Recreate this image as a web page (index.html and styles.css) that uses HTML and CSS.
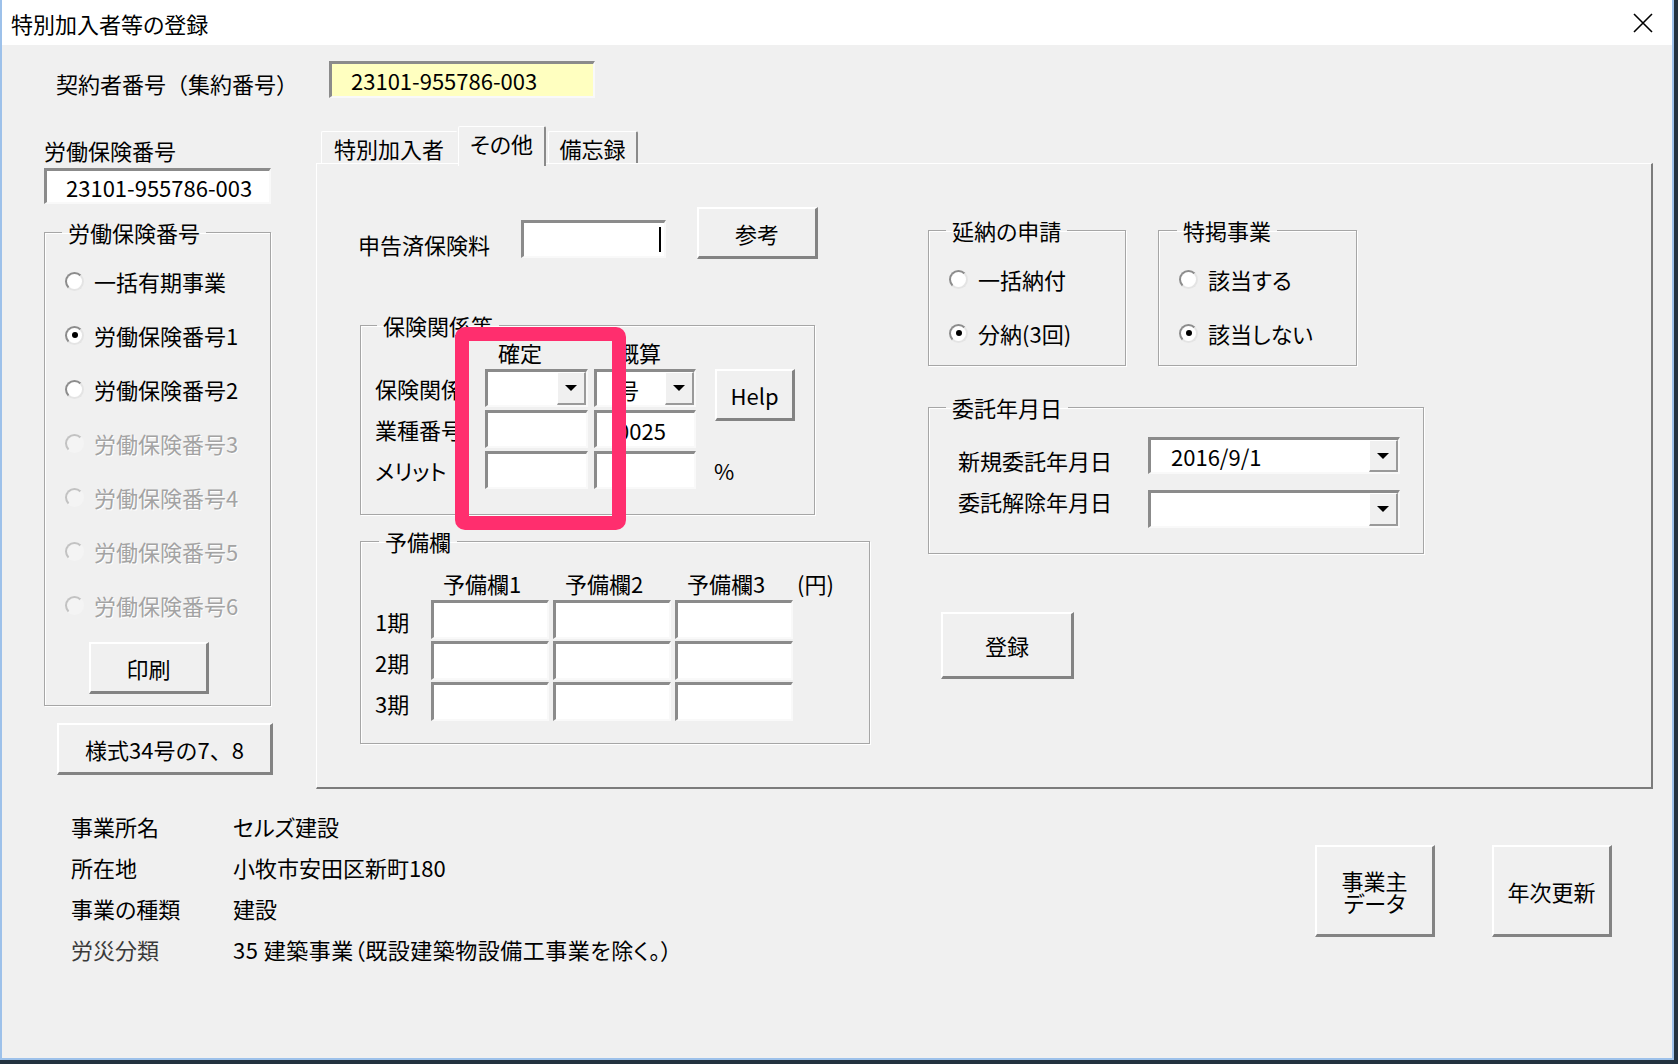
FILE: index.html
```html
<!DOCTYPE html>
<html lang="ja">
<head>
    <meta charset="UTF-8">
    <meta name="viewport" content="width=device-width, initial-scale=1.0">
    <title>特別加入者等の登録</title>
    <link rel="stylesheet" href="styles.css">
</head>
<body>
    <div class="window">
        <div class="titlebar">
            <span class="title">特別加入者等の登録</span>
            <span class="close">
                <svg width="20" height="20" viewBox="0 0 20 20">
                    <path d="M1 1 L19 19 M19 1 L1 19" stroke="#000" stroke-width="1.6" fill="none"/>
                </svg>
            </span>
        </div>
        <div class="client">
            <div class="top-row">
                <span class="top-label">契約者番号（集約番号）</span>
                <div class="field yellow">23101-955786-003</div>
            </div>

            <div class="main">
                <!-- left column -->
                <div class="left-col">
                    <div class="lbl">労働保険番号</div>
                    <div class="field num-box">23101-955786-003</div>
                    <fieldset class="group no-group">
                        <legend>労働保険番号</legend>
                        <div class="opts">
                            <div class="opt"><span class="radio"></span>一括有期事業</div>
                            <div class="opt"><span class="radio on"></span>労働保険番号1</div>
                            <div class="opt"><span class="radio"></span>労働保険番号2</div>
                            <div class="opt off"><span class="radio"></span>労働保険番号3</div>
                            <div class="opt off"><span class="radio"></span>労働保険番号4</div>
                            <div class="opt off"><span class="radio"></span>労働保険番号5</div>
                            <div class="opt off"><span class="radio"></span>労働保険番号6</div>
                        </div>
                        <button class="btn print-btn">印刷</button>
                    </fieldset>
                    <button class="btn form-btn">様式34号の7、8</button>
                </div>

                <!-- tabs -->
                <div class="right-col">
                    <div class="tabs">
                        <div class="tab t1">特別加入者</div>
                        <div class="tab t2 active">その他</div>
                        <div class="tab t3">備忘録</div>
                    </div>
                    <div class="panel">
                        <div class="sec-left">
                            <div class="report-row">
                                <span class="report-label">申告済保険料</span>
                                <div class="field report-input"><span class="caret"></span></div>
                                <button class="btn ref-btn">参考</button>
                            </div>

                            <fieldset class="group hoken">
                                <legend>保険関係等</legend>
                                <div class="hk-grid">
                                    <span></span>
                                    <span class="hd hd1">確定</span>
                                    <span class="hd hd2">概算</span>
                                    <span></span>

                                    <span class="rl">保険関係</span>
                                    <div class="field combo"><span class="ctext"></span><span class="drop"></span></div>
                                    <div class="field combo"><span class="ctext shift">号</span><span class="drop"></span></div>
                                    <button class="btn help-btn">Help</button>

                                    <span class="rl">業種番号</span>
                                    <div class="field cell"></div>
                                    <div class="field cell shift">0025</div>
                                    <span></span>

                                    <span class="rl">メリット</span>
                                    <div class="field cell"></div>
                                    <div class="field cell"></div>
                                    <span class="pct">%</span>
                                </div>
                            </fieldset>

                            <fieldset class="group yobi">
                                <legend>予備欄</legend>
                                <div class="yb-grid">
                                    <span></span>
                                    <span class="yh">予備欄1</span>
                                    <span class="yh">予備欄2</span>
                                    <span class="yh">予備欄3</span>
                                    <span class="yen">(円)</span>

                                    <span class="yl">1期</span>
                                    <div class="field"></div>
                                    <div class="field"></div>
                                    <div class="field"></div>
                                    <span></span>

                                    <span class="yl">2期</span>
                                    <div class="field"></div>
                                    <div class="field"></div>
                                    <div class="field"></div>
                                    <span></span>

                                    <span class="yl">3期</span>
                                    <div class="field"></div>
                                    <div class="field"></div>
                                    <div class="field"></div>
                                    <span></span>
                                </div>
                            </fieldset>
                        </div>

                        <div class="sec-right">
                            <div class="en-row">
                                <fieldset class="group en">
                                    <legend>延納の申請</legend>
                                    <div class="opts small">
                                        <div class="opt"><span class="radio"></span>一括納付</div>
                                        <div class="opt"><span class="radio on"></span>分納(3回)</div>
                                    </div>
                                </fieldset>
                                <fieldset class="group tk">
                                    <legend>特掲事業</legend>
                                    <div class="opts small">
                                        <div class="opt"><span class="radio"></span>該当する</div>
                                        <div class="opt"><span class="radio on"></span>該当しない</div>
                                    </div>
                                </fieldset>
                            </div>

                            <fieldset class="group itaku">
                                <legend>委託年月日</legend>
                                <div class="it-row r1">
                                    <span class="it-label">新規委託年月日</span>
                                    <div class="field combo wide"><span class="ctext">2016/9/1</span><span class="drop"></span></div>
                                </div>
                                <div class="it-row r2">
                                    <span class="it-label">委託解除年月日</span>
                                    <div class="field combo wide"><span class="ctext"></span><span class="drop"></span></div>
                                </div>
                            </fieldset>

                            <button class="btn reg-btn">登録</button>
                        </div>
                    </div>
                </div>
            </div>

            <div class="info-row">
                <div class="info">
                    <span>事業所名</span><span>セルズ建設</span>
                    <span>所在地</span><span>小牧市安田区新町180</span>
                    <span>事業の種類</span><span>建設</span>
                    <span class="dim">労災分類</span><span class="wide-txt">35 建築事業（既設建築物設備工事業を除く。）</span>
                </div>
                <div class="bottom-btns">
                    <button class="btn big-btn jigyo">事業主<br>データ</button>
                    <button class="btn big-btn">年次更新</button>
                </div>
            </div>
        </div>
    </div>

    <!-- highlight -->
    <div class="mark"></div>
</body>
</html>
```

FILE: styles.css
```css
* {
    box-sizing: border-box;
}

body {
    margin: 0;
    background: #23323f;
    font-family: "Noto Sans CJK JP", "Liberation Sans", sans-serif;
    font-size: 22px;
    color: #000;
    font-feature-settings: "palt";
}

.window {
    width: 1674px;
    height: 1060px;
    border: 2px solid #9dc1ea;
    border-top: none;
    background: #f0f0f0;
    display: flex;
    flex-direction: column;
}

.titlebar {
    height: 45px;
    flex: none;
    background: #fff;
    display: flex;
    align-items: center;
    padding: 0 19px 0 9px;
}

.title {
    line-height: 28px;
}

.close {
    margin-left: auto;
    display: flex;
}

.client {
    flex: 1;
}

/* sunken edit box */
.field {
    background: #fff;
    border-style: solid;
    border-width: 3px 2px 2px 3px;
    border-color: #8b8b8b #f9f9f9 #f9f9f9 #8b8b8b;
    display: flex;
    align-items: center;
    line-height: 28px;
    white-space: nowrap;
    overflow: hidden;
}

/* raised push button */
.btn {
    display: block;
    background: #f0f0f0;
    border-style: solid;
    border-width: 2px 3px 3px 2px;
    border-color: #fff #838383 #838383 #fff;
    font: inherit;
    color: #000;
    padding: 0;
    line-height: 28px;
}

.top-row {
    display: flex;
    padding: 16px 0 0 54px;
}

.top-label {
    width: 273px;
    margin-top: 8px;
    line-height: 28px;
    font-feature-settings: normal;
}

.yellow {
    width: 266px;
    height: 37px;
    background: #ffffc0;
    padding-left: 19px;
}

.main {
    display: flex;
    margin-top: 28px;
    padding-left: 42px;
}

.left-col {
    width: 229px;
    margin-top: 10px;
}

.lbl {
    line-height: 28px;
}

.num-box {
    margin-top: 4px;
    width: 227px;
    height: 36px;
    padding-left: 19px;
}

/* group boxes */
.group {
    margin: 0;
    padding: 0;
    min-width: 0;
    border: 1px solid #a6a6a6;
    box-shadow: inset 1px 1px 0 #fff, 1px 1px 0 #fff;
}

.group legend {
    padding: 0 6px;
    line-height: 28px;
    margin-left: 17px;
}

.no-group {
    margin-top: 14px;
    width: 227px;
    height: 488px;
}

.opts {
    padding-top: 8px;
}

.opt {
    display: flex;
    align-items: center;
    height: 54px;
    padding-left: 20px;
    gap: 10px;
    white-space: nowrap;
}

.opt.off {
    color: #a3a3a3;
    text-shadow: 1px 1px 0 #fff;
}

.radio {
    width: 19px;
    height: 19px;
    flex: none;
    border-radius: 50%;
    border: 2px solid;
    border-color: #8c8c8c #e4e4e4 #e4e4e4 #8c8c8c;
    background: #fff;
    display: flex;
    align-items: center;
    justify-content: center;
}

.radio.on::after {
    content: "";
    width: 6px;
    height: 6px;
    border-radius: 50%;
    background: #000;
}

.opt.off .radio {
    border-color: #c2c2c2 #f4f4f4 #f4f4f4 #c2c2c2;
    background: #f4f4f4;
}

.print-btn {
    margin: 10px 0 0 44px;
    width: 120px;
    height: 52px;
}

.form-btn {
    margin: 17px 0 0 13px;
    width: 216px;
    height: 52px;
    font-feature-settings: normal;
}

/* tabs */
.right-col {
    margin-left: 43px;
    width: 1337px;
}

.tabs {
    display: flex;
    align-items: flex-end;
    height: 37px;
    padding-left: 5px;
}

.tab {
    height: 32px;
    display: flex;
    align-items: center;
    justify-content: center;
    border-style: solid;
    border-width: 1px 2px 0 1px;
    border-color: #fff #8a8a8a transparent #fff;
    border-radius: 2px 2px 0 0;
}

.t1 {
    width: 137px;
    border-right-color: transparent;
}

.t2 {
    width: 88px;
}

.t3 {
    width: 90px;
    margin-left: 2px;
}

.tab.active {
    height: 40px;
    margin-bottom: -3px;
    padding-bottom: 8px;
    background: #f0f0f0;
    position: relative;
    z-index: 1;
}

.panel {
    height: 626px;
    border-style: solid;
    border-width: 1px 2px 2px 1px;
    border-color: #fff #7c7c7c #7c7c7c #fff;
    display: flex;
    align-items: flex-start;
    padding: 43px 0 0 41px;
}

.sec-left {
    width: 512px;
}

.report-row {
    display: flex;
    height: 52px;
}

.report-label {
    width: 163px;
    margin-top: 23px;
    line-height: 28px;
}

.report-input {
    margin-top: 13px;
    width: 145px;
    height: 38px;
    justify-content: flex-end;
    padding-right: 3px;
}

.caret {
    width: 2px;
    height: 25px;
    background: #000;
}

.ref-btn {
    margin-left: 31px;
    width: 121px;
    height: 52px;
}

.hoken {
    margin: 52px 0 0 2px;
    width: 455px;
    height: 204px;
}

.hoken legend {
    margin-left: 16px;
}

.hk-grid {
    display: grid;
    grid-template-columns: 104px 103px 102px 80px;
    grid-template-rows: 27px 38px 38px 38px;
    column-gap: 6px;
    row-gap: 3px;
    padding-left: 14px;
}

.hd {
    line-height: 27px;
}

.hd1 {
    padding-left: 13px;
}

.hd2 {
    padding-left: 23px;
}

.rl {
    line-height: 38px;
    white-space: nowrap;
}

.combo {
    justify-content: space-between;
    align-items: stretch;
}

.ctext {
    display: flex;
    align-items: center;
    padding-left: 20px;
}

.cell.shift,
.ctext.shift {
    padding-left: 20px;
}

.drop {
    width: 29px;
    flex: none;
    background: #f0f0f0;
    border-style: solid;
    border-width: 1px 2px 2px 1px;
    border-color: #fff #9a9a9a #9a9a9a #fff;
    display: flex;
    align-items: center;
    justify-content: center;
}

.drop::after {
    content: "";
    border-left: 6px solid transparent;
    border-right: 6px solid transparent;
    border-top: 6px solid #000;
}

.help-btn {
    margin-left: 13px;
    width: 80px;
    height: 52px;
    align-self: start;
}

.pct {
    margin-left: 12px;
    line-height: 38px;
}

.yobi {
    margin: 12px 0 0 2px;
    width: 510px;
    height: 217px;
}

.yobi legend {
    margin-left: 18px;
}

.yb-grid {
    display: grid;
    grid-template-columns: 52px 118px 118px 118px auto;
    grid-template-rows: 30px 39px 39px 39px;
    column-gap: 4px;
    row-gap: 2px;
    margin-top: 13px;
    padding-left: 14px;
}

.yh {
    line-height: 30px;
    padding-left: 12px;
    white-space: nowrap;
}

.yen {
    line-height: 30px;
}

.yl {
    line-height: 42px;
}

/* right part of panel */
.sec-right {
    margin: 9px 0 0 58px;
    width: 496px;
}

.en-row {
    display: flex;
    gap: 32px;
}

.en {
    width: 198px;
    height: 150px;
}

.tk {
    width: 199px;
    height: 150px;
}

.tk legend {
    margin-left: 18px;
}

.itaku {
    margin-top: 27px;
    width: 496px;
    height: 161px;
}

.it-row {
    display: flex;
    align-items: flex-start;
    padding-left: 29px;
}

.it-row.r1 {
    margin-top: 16px;
    height: 37px;
}

.it-row.r2 {
    margin-top: 16px;
    height: 38px;
}

.it-label {
    width: 190px;
    line-height: 28px;
}

.r1 .it-label {
    margin-top: 9px;
}

.r2 .it-label {
    margin-top: -3px;
}

.combo.wide {
    width: 252px;
    height: 100%;
}

.reg-btn {
    margin: 58px 0 0 13px;
    width: 133px;
    height: 67px;
}

/* bottom info */
.info-row {
    display: flex;
    margin-top: 17px;
    padding: 0 60px 0 69px;
}

.info {
    display: grid;
    grid-template-columns: 162px auto;
    grid-auto-rows: 41px;
    line-height: 41px;
    white-space: nowrap;
}

.info .dim {
    color: #3a3a3a;
}

.info .wide-txt {
    letter-spacing: 0.5px;
}

.bottom-btns {
    margin: 39px 0 0 auto;
    display: flex;
    gap: 57px;
}

.big-btn {
    width: 120px;
    height: 92px;
}

.jigyo {
    line-height: 22px;
}

/* annotation frame */
.mark {
    position: absolute;
    left: 455px;
    top: 327px;
    width: 171px;
    height: 203px;
    border: 14px solid #ff2e6e;
    border-radius: 10px;
}
```
